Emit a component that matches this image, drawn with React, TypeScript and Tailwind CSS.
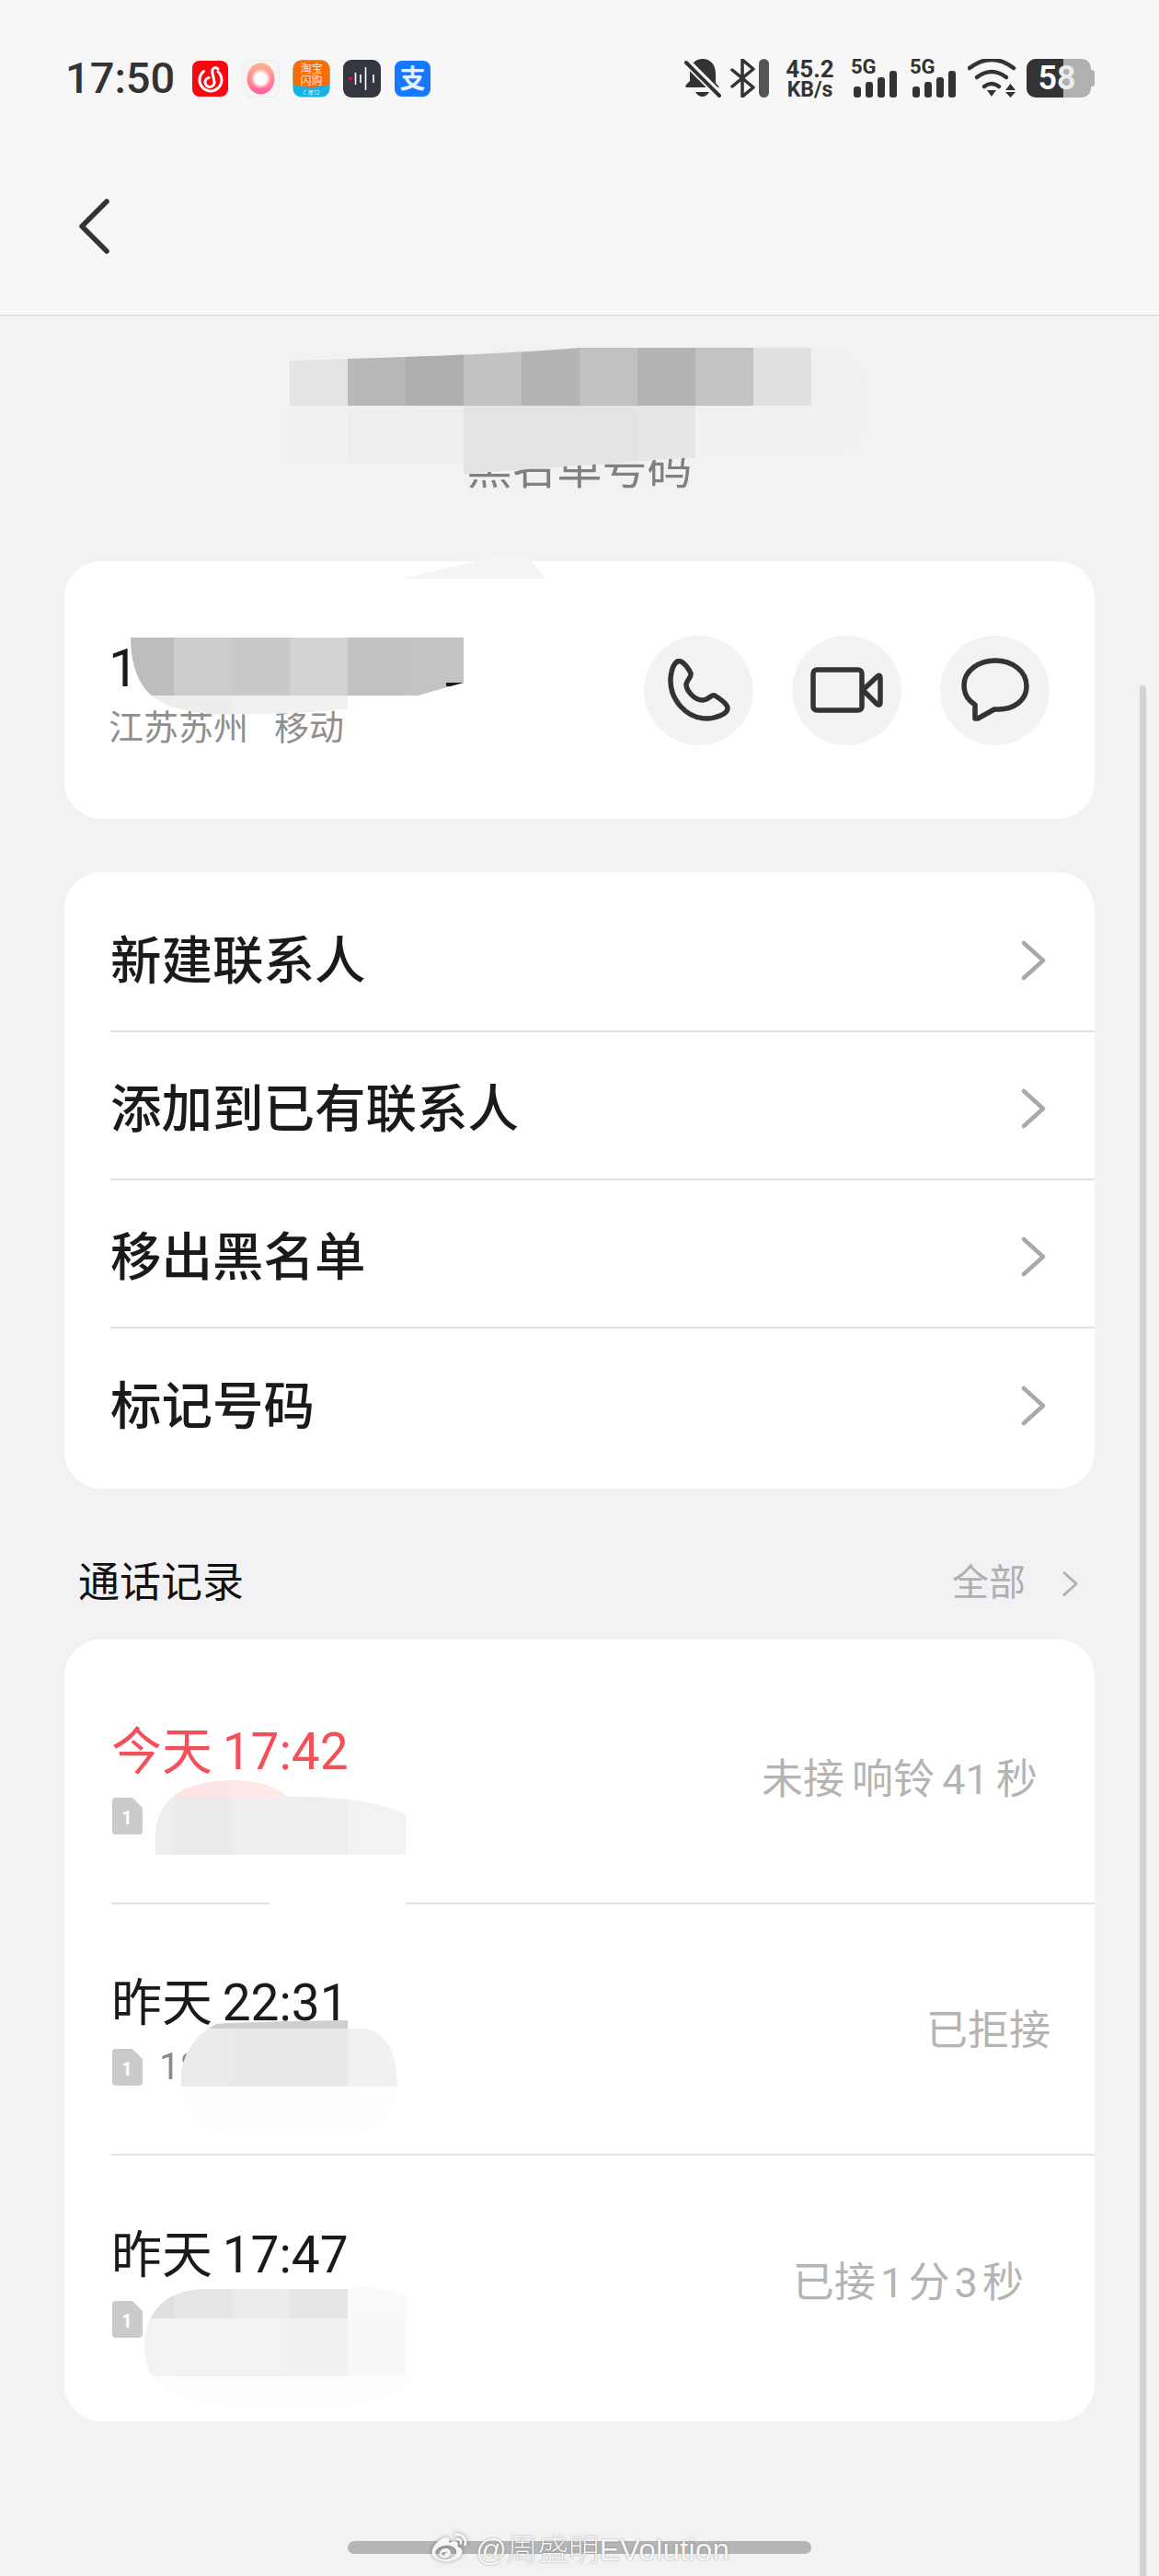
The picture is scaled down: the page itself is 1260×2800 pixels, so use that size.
import { FaWeibo } from "react-icons/fa";

type Cell = [number, number, number, number, string];

// Pixelated redaction patches. Coordinates inside viewBox are page coordinates.
function Mosaic({ id, className, viewBox, clip, cells }: { id: string; className: string; viewBox: string; clip: string; cells: Cell[] }) {
  return (
    <svg className={`absolute ${className}`} viewBox={viewBox}>
      <defs>
        <clipPath id={id}>
          <path d={clip} />
        </clipPath>
      </defs>
      <g clipPath={`url(#${id})`}>
        {cells.map(([x, y, w, h, fill], i) => (
          <rect key={i} x={x} y={y} width={w} height={h} fill={fill} />
        ))}
      </g>
    </svg>
  );
}

function Chevron({ className }: { className: string }) {
  return (
    <svg className={className} viewBox="0 0 27 44" fill="none" stroke="currentColor" strokeWidth="4.5" strokeLinecap="round" strokeLinejoin="round">
      <path d="M3 3 L24 22 L3 41" />
    </svg>
  );
}

function AppIcons() {
  return (
    <div className="ml-[18px] flex gap-[14px]">
      <svg className="h-[41px] w-[41px]" viewBox="0 0 41 41" fill="none">
        <rect x="1" y="1" width="39" height="39" rx="8" fill="#fb0510" />
        <g stroke="#fff" strokeWidth="3" strokeLinecap="round">
          <path d="M13.5 12.5 A12 12 0 1 0 29 13" />
          <path d="M25 25 A5 5 0 1 1 19 19.5" />
          <path d="M25 25 C25 20 22 15 23 11 C24 8 27 8 29 10" />
        </g>
      </svg>
      <svg className="h-[41px] w-[41px]" viewBox="0 0 41 41">
        <defs>
          <linearGradient id="ringFill" x1="0" y1="0" x2="0" y2="1">
            <stop offset="0" stopColor="#ffb48a" />
            <stop offset="1" stopColor="#ff5f9e" />
          </linearGradient>
          <radialGradient id="ringHole">
            <stop offset="0.55" stopColor="#fff" />
            <stop offset="1" stopColor="#fff" stopOpacity="0" />
          </radialGradient>
        </defs>
        <rect x="0.5" y="0.5" width="40" height="40" rx="9" fill="#f5f5f6" stroke="#ececee" />
        <ellipse cx="20.5" cy="20.5" rx="15" ry="17" fill="url(#ringFill)" />
        <circle cx="20.5" cy="20.5" r="11" fill="url(#ringHole)" />
      </svg>
      <svg className="h-[41px] w-[41px]" viewBox="0 0 41 41">
        <rect x="0.5" y="0.5" width="40" height="40" rx="9" fill="#12b5ea" />
        <path d="M0.5 9.5 a9 9 0 0 1 9 -9 h22 a9 9 0 0 1 9 9 V27 Q20 33 0.5 27 Z" fill="#f96c06" />
        <g fill="#ffe9d2" fontSize="12" fontFamily="'Noto Sans CJK SC',sans-serif" textAnchor="middle">
          <text x="20.5" y="14">淘宝</text>
          <text x="20.5" y="27">闪购</text>
        </g>
        <text x="20.5" y="38" fill="#d9f6ff" fontSize="6" fontFamily="'Noto Sans CJK SC',sans-serif" textAnchor="middle">C 厚72</text>
      </svg>
      <svg className="h-[41px] w-[41px]" viewBox="0 0 41 41">
        <rect x="0" y="0" width="41" height="41" rx="9" fill="#343640" />
        <circle cx="8" cy="20.5" r="2.2" fill="#d3104e" />
        <g stroke="#fff" strokeWidth="1.6">
          <path d="M13.5 14 V27" />
          <path d="M19 16 V25" />
          <path d="M24.5 8 V33" />
          <path d="M33 16 V25" />
        </g>
      </svg>
      <svg className="h-[41px] w-[41px]" viewBox="0 0 41 41">
        <rect x="1" y="1" width="39" height="39" rx="8" fill="#1677ff" />
        <text x="20.5" y="31" fill="#e6f3ff" fontSize="28" fontWeight="700" fontFamily="'Noto Sans CJK SC',sans-serif" textAnchor="middle">支</text>
      </svg>
    </div>
  );
}

function Signal() {
  return (
    <svg className="h-[42px] w-[50px]" viewBox="0 0 50 42" fill="#333">
      <text x="0" y="16" fontSize="22" fontWeight="700" fontFamily="Roboto,sans-serif">5G</text>
      <rect x="3" y="30" width="8" height="12" rx="3" />
      <rect x="16" y="25" width="8" height="17" rx="3" />
      <rect x="29" y="20" width="8" height="22" rx="3" />
      <rect x="42" y="13" width="8" height="29" rx="3" />
    </svg>
  );
}

function StatusRight() {
  return (
    <div className="flex items-start text-[#333]">
      <svg className="h-[42px] w-[40px]" viewBox="0 0 40 42" fill="#333">
        <path d="M20 0 C28 0 34 6 34 16 V26 L38 31 H3 Q0 31 2 28 L6 24 V14 C6 6 12 0 20 0 Z" />
        <path d="M12 36 H27 Q24 41 19.5 41 Q15 41 12 36 Z" />
        <path d="M-1 0 L41 42" stroke="#f7f7f7" strokeWidth="9" />
        <path d="M2 4 L38 40" stroke="#333" strokeWidth="4" strokeLinecap="round" />
      </svg>
      <svg className="ml-[10px] h-[42px] w-[27px]" viewBox="0 0 27 42" fill="none" stroke="#333" strokeWidth="3.5" strokeLinecap="round" strokeLinejoin="round">
        <path d="M2 12 L25 31 L13 41 V1 L25 11 L2 30" />
      </svg>
      <div className="ml-[4px] h-[42px] w-[11px] rounded-full bg-[#555]" />
      <div className="ml-[18px] flex w-[53px] flex-col items-center font-bold">
        <span className="text-[26px] leading-[22px]">45.2</span>
        <span className="mt-[3px] text-[23px] leading-[18px]">KB/s</span>
      </div>
      <div className="ml-[18px]">
        <Signal />
      </div>
      <div className="ml-[14px]">
        <Signal />
      </div>
      <svg className="ml-[13px] h-[42px] w-[53px]" viewBox="0 0 53 42" fill="#333">
        <g fill="none" stroke="#333" strokeWidth="4.5" strokeLinecap="round">
          <path d="M2 10 Q26 -8 50 10" />
          <path d="M10 20 Q26 8 42 20" />
          <path d="M18 30 Q26 24 34 30" />
        </g>
        <path d="M21 34 H31 L26 41 Z" />
        <path d="M41 34 H52 L46.5 27 Z" />
        <path d="M41 36 H52 L46.5 42 Z" />
      </svg>
      <div className="ml-[11px] flex items-center">
        <div className="relative flex h-[42px] w-[70px] overflow-hidden rounded-[10px] bg-[#b0b0b0]">
          <div className="h-full w-[40px] bg-[#333]" />
          <span className="absolute inset-0 flex items-center justify-center pr-[4px] text-[36px] font-semibold leading-none text-white">
            5<span className="text-[#ececec]">8</span>
          </span>
        </div>
        <div className="h-[18px] w-[4px] rounded-r-[3px] bg-[#b0b0b0]" />
      </div>
    </div>
  );
}

function ActionButton({ children }: { children: React.ReactNode }) {
  return <div className="flex h-[119px] w-[119px] items-center justify-center rounded-full bg-[#f3f3f4]">{children}</div>;
}

function SimIcon() {
  return (
    <svg className="h-[40px] w-[33px] shrink-0" viewBox="0 0 33 40">
      <path d="M4 0 H22 L33 11 V36 Q33 40 29 40 H4 Q0 40 0 36 V4 Q0 0 4 0 Z" fill="#cbcbcb" />
      <text x="16" y="29" fill="#fff" fontSize="20" fontWeight="700" fontFamily="Roboto,sans-serif" textAnchor="middle">1</text>
    </svg>
  );
}

const menuItems = ["新建联系人", "添加到已有联系人", "移出黑名单", "标记号码"];

const calls = [
  { time: "今天 17:42", red: true, sub: "", status: "未接 响铃 41 秒", tail: "pr-[62px] [word-spacing:-3px]" },
  { time: "昨天 22:31", red: false, sub: "18", status: "已拒接", tail: "pr-[48px]" },
  { time: "昨天 17:47", red: false, sub: "", status: "已接 1 分 3 秒", tail: "pr-[77px] [word-spacing:-6px]" },
];

export default function App() {
  return (
    <div className="relative h-[2800px] w-[1260px] overflow-hidden bg-[#f2f2f4] font-['Roboto','Noto_Sans_CJK_SC',sans-serif]">
      <header className="h-[343px] border-b border-[#d6d6d8] bg-[#f7f7f7]">
        <div className="flex items-start justify-between pl-[71px] pr-[70px] pt-[64px]">
          <div className="flex items-center">
            <span className="text-[47px] font-medium leading-[42px] text-[#333]">17:50</span>
            <AppIcons />
          </div>
          <StatusRight />
        </div>
        <svg className="ml-[85px] mt-[109px] h-[60px] w-[34px]" viewBox="0 0 34 60" fill="none" stroke="#333" strokeWidth="5.5" strokeLinecap="round" strokeLinejoin="round">
          <path d="M31 3 L4 30 L31 57" />
        </svg>
      </header>

      <main className="px-[70px]">
        <p className="mt-[139px] h-[56px] text-center text-[49px] leading-[56px] text-[#808080]">黑名单号码</p>

        <section className="mt-[72px] flex h-[280px] items-center justify-between rounded-[40px] bg-white pl-[48px] pr-[49px]">
          <div className="pt-[9px]">
            <div className="h-[62px] text-[58px] leading-[62px] text-[#1a1a1a]">1</div>
            <div className="mt-[11px] flex gap-[28px] text-[38px] leading-[46px] text-[#8f8f8f]">
              <span>江苏苏州</span>
              <span>移动</span>
            </div>
          </div>
          <div className="flex gap-[42px]">
            <ActionButton>
              <svg className="h-[68px] w-[68px]" viewBox="0 0 68 68" fill="none" stroke="#333" strokeWidth="5.5" strokeLinejoin="round">
                <path d="M14 3 C9 1 4 8 3 22 C2 44 20 65 42 65 C52 65 65 60 65 54 C65 49 56 43 51 40 C48 38 44 45 38 45 C28 45 20 34 20 28 C20 24 26 20 25 16 C24 13 18 4 14 3 Z" />
              </svg>
            </ActionButton>
            <ActionButton>
              <svg className="h-[52px] w-[80px]" viewBox="0 0 80 52" fill="none" stroke="#333" strokeWidth="5.5" strokeLinejoin="round">
                <rect x="3" y="4" width="53" height="44" rx="4" />
                <path d="M57 26 L73 11 Q76 9 76 13 V39 Q76 44 72 41 Z" />
              </svg>
            </ActionButton>
            <ActionButton>
              <svg className="h-[70px] w-[74px]" viewBox="0 0 74 70" fill="none" stroke="#333" strokeWidth="5.5" strokeLinejoin="round">
                <path d="M37 3 C55 3 71 14 71 31 C71 47 56 56 41 56 H36 L18 66 L15 66 V51 C7 46 3 38 3 30 C3 14 19 3 37 3 Z" />
              </svg>
            </ActionButton>
          </div>
        </section>

        <section className="mt-[58px] rounded-[40px] bg-white pb-[13px] pt-[13px]">
          {menuItems.map((item, i) => (
            <div key={item} className={`ml-[50px] flex h-[161px] items-center justify-between pr-[53px] pt-[6px] text-[55.5px] font-medium text-[#1a1a1a] ${i < 3 ? "border-b-2 border-[#e2e2e4]" : ""}`}>
              <span className="pt-[4px]">{item}</span>
              <Chevron className="h-[44px] w-[27px] text-[#a9a9a9]" />
            </div>
          ))}
        </section>

        <div className="mt-[73px] flex h-[60px] items-center justify-between pl-[15px] pr-[18px]">
          <span className="text-[45px] text-[#111]">通话记录</span>
          <div className="flex items-center gap-[40px] text-[#b0b0b0]">
            <span className="text-[40px]">全部</span>
            <Chevron className="h-[29px] w-[17px]" />
          </div>
        </div>

        <section className="mt-[31px] rounded-[40px] bg-white pb-[16px] pt-[15px]">
          {calls.map((call, i) => (
            <div key={call.time} className={`ml-[51px] flex h-[273px] items-center justify-between ${call.tail} ${i < 2 ? "border-b-2 border-[#e2e2e4]" : ""}`}>
              <div>
                <div className={`h-[64px] text-[55px] leading-[64px] [word-spacing:-3px] ${call.red ? "text-[#f4505a]" : "text-[#1a1a1a]"}`}>{call.time}</div>
                <div className="ml-[1px] mt-[18px] flex h-[40px] items-center gap-[18px] text-[40px] leading-[40px] text-[#8a8a8a]">
                  <SimIcon />
                  <span>{call.sub}</span>
                </div>
              </div>
              <span className="pt-[4px] text-[45px] text-[#b4b4b4]">{call.status}</span>
            </div>
          ))}
        </section>
      </main>

      {/* redaction patches lying over the content */}
      <Mosaic
        id="m1"
        className="left-[315px] top-[378px] h-[137px] w-[630px]"
        viewBox="315 378 630 137"
        clip="M315 392 L440 388 Q560 384 630 378 L915 378 Q945 395 945 441 Q945 482 915 495 L756 497 L504 515 L504 503 L315 503 Z"
        cells={[
          [315, 378, 63, 63, "#e4e4e4"],
          [378, 378, 63, 63, "#b8b8b9"],
          [441, 378, 63, 63, "#aeaeae"],
          [504, 378, 63, 63, "#c2c2c3"],
          [567, 378, 63, 63, "#b4b4b4"],
          [630, 378, 63, 63, "#c1c1c2"],
          [693, 378, 63, 63, "#b4b4b4"],
          [756, 378, 63, 63, "#c3c3c3"],
          [819, 378, 63, 63, "#e0e0e2"],
          [882, 378, 63, 63, "#f0f0f2"],
          [315, 441, 63, 74, "#f1f1f3"],
          [378, 441, 126, 74, "#eeeef0"],
          [504, 441, 126, 74, "#e3e3e5"],
          [630, 441, 63, 74, "#e4e4e6"],
          [693, 441, 63, 74, "#e6e6e8"],
          [756, 441, 189, 74, "#f1f1f3"],
        ]}
      />
      <svg className="absolute left-[437px] top-[603px] h-[26px] w-[155px]" viewBox="437 603 155 26">
        <path d="M437 629 L540 605 Q560 601 572 607 Q585 615 592 629 Z" fill="#f4f4f5" />
      </svg>
      <Mosaic
        id="m2"
        className="left-[142px] top-[693px] h-[84px] w-[363px]"
        viewBox="142 693 363 84"
        clip="M142 693 Q142 725 155 745 Q172 772 230 776 Q320 778 378 770 L378 756 L454 756 L504 742 L504 693 Z"
        cells={[
          [142, 693, 47, 63, "#bdbdbd"],
          [189, 693, 63, 63, "#cdcdcd"],
          [252, 693, 63, 63, "#c9c9c9"],
          [315, 693, 63, 63, "#d3d3d3"],
          [378, 693, 63, 63, "#c1c1c1"],
          [441, 693, 63, 63, "#c3c3c3"],
          [142, 756, 110, 22, "#ededed"],
          [252, 756, 126, 22, "#f1f1f1"],
          [485, 742, 20, 4, "#1a1a1a"],
        ]}
      />
      <Mosaic
        id="m3"
        className="left-[169px] top-[1935px] h-[137px] w-[272px]"
        viewBox="169 1935 272 137"
        clip="M169 2016 L169 1990 Q172 1960 200 1945 Q225 1935 250 1935 Q295 1935 312 1953 Q400 1952 441 1972 L441 2016 Z M293 2066 H441 V2072 H293 Z"
        cells={[
          [169, 1935, 83, 18, "#fde4e5"],
          [252, 1935, 100, 18, "#fee8e8"],
          [169, 1953, 20, 63, "#eeeeee"],
          [189, 1953, 63, 63, "#ebebeb"],
          [252, 1953, 126, 63, "#eeeeee"],
          [378, 1953, 63, 63, "#f2f2f2"],
          [293, 2066, 148, 6, "#ffffff"],
        ]}
      />
      <Mosaic
        id="m4"
        className="left-[197px] top-[2196px] h-[126px] w-[236px]"
        viewBox="197 2196 236 126"
        clip="M197 2268 L197 2250 Q205 2215 235 2200 Q245 2198 378 2196 L378 2205 L400 2205 Q432 2215 432 2268 Q430 2310 380 2322 H250 Q205 2310 197 2268 Z"
        cells={[
          [197, 2196, 181, 9, "#cfcfcf"],
          [197, 2205, 55, 63, "#ebebeb"],
          [252, 2205, 126, 63, "#e9e9e9"],
          [378, 2205, 63, 63, "#f1f1f1"],
          [197, 2268, 240, 60, "#fdfdfd"],
        ]}
      />
      <Mosaic
        id="m5"
        className="left-[157px] top-[2484px] h-[132px] w-[294px]"
        viewBox="157 2484 294 132"
        clip="M157 2550 Q157 2525 170 2510 Q185 2490 220 2488 L378 2488 Q405 2482 441 2496 L441 2582 L450 2583 Q425 2614 360 2615 L250 2615 Q190 2610 165 2583 Q157 2570 157 2550 Z"
        cells={[
          [157, 2484, 32, 36, "#dfdfdf"],
          [189, 2484, 63, 36, "#e6e6e6"],
          [252, 2484, 63, 36, "#ececec"],
          [315, 2484, 63, 36, "#e5e5e5"],
          [378, 2484, 73, 36, "#fafafa"],
          [157, 2520, 32, 63, "#f3f3f3"],
          [189, 2520, 126, 63, "#f2f2f2"],
          [315, 2520, 63, 63, "#f1f1f1"],
          [378, 2520, 63, 63, "#f8f8f8"],
          [157, 2583, 300, 33, "#fdfdfd"],
        ]}
      />

      {/* scrollbar */}
      <div className="absolute bottom-0 right-[14px] top-[745px] w-[7px] rounded-t-full bg-[#d2d2d4]" />

      {/* gesture bar and watermark */}
      <div className="absolute left-[378px] top-[2762px] h-[14px] w-[504px] rounded-full bg-[#b5b5b5]" />
      <div className="absolute left-[467px] top-[2748px] flex items-center gap-[7px] text-[#f6f6f6]">
        <FaWeibo className="h-[38px] w-[43px] drop-shadow-[0_0_2px_rgba(0,0,0,0.4)]" />
        <span className="pt-[4px] font-['Liberation_Sans','Noto_Sans_CJK_SC',sans-serif] text-[33.5px] font-light leading-[40px] [text-shadow:0_0_2px_rgba(0,0,0,0.4)]">@周盛明EVolution</span>
      </div>
    </div>
  );
}
